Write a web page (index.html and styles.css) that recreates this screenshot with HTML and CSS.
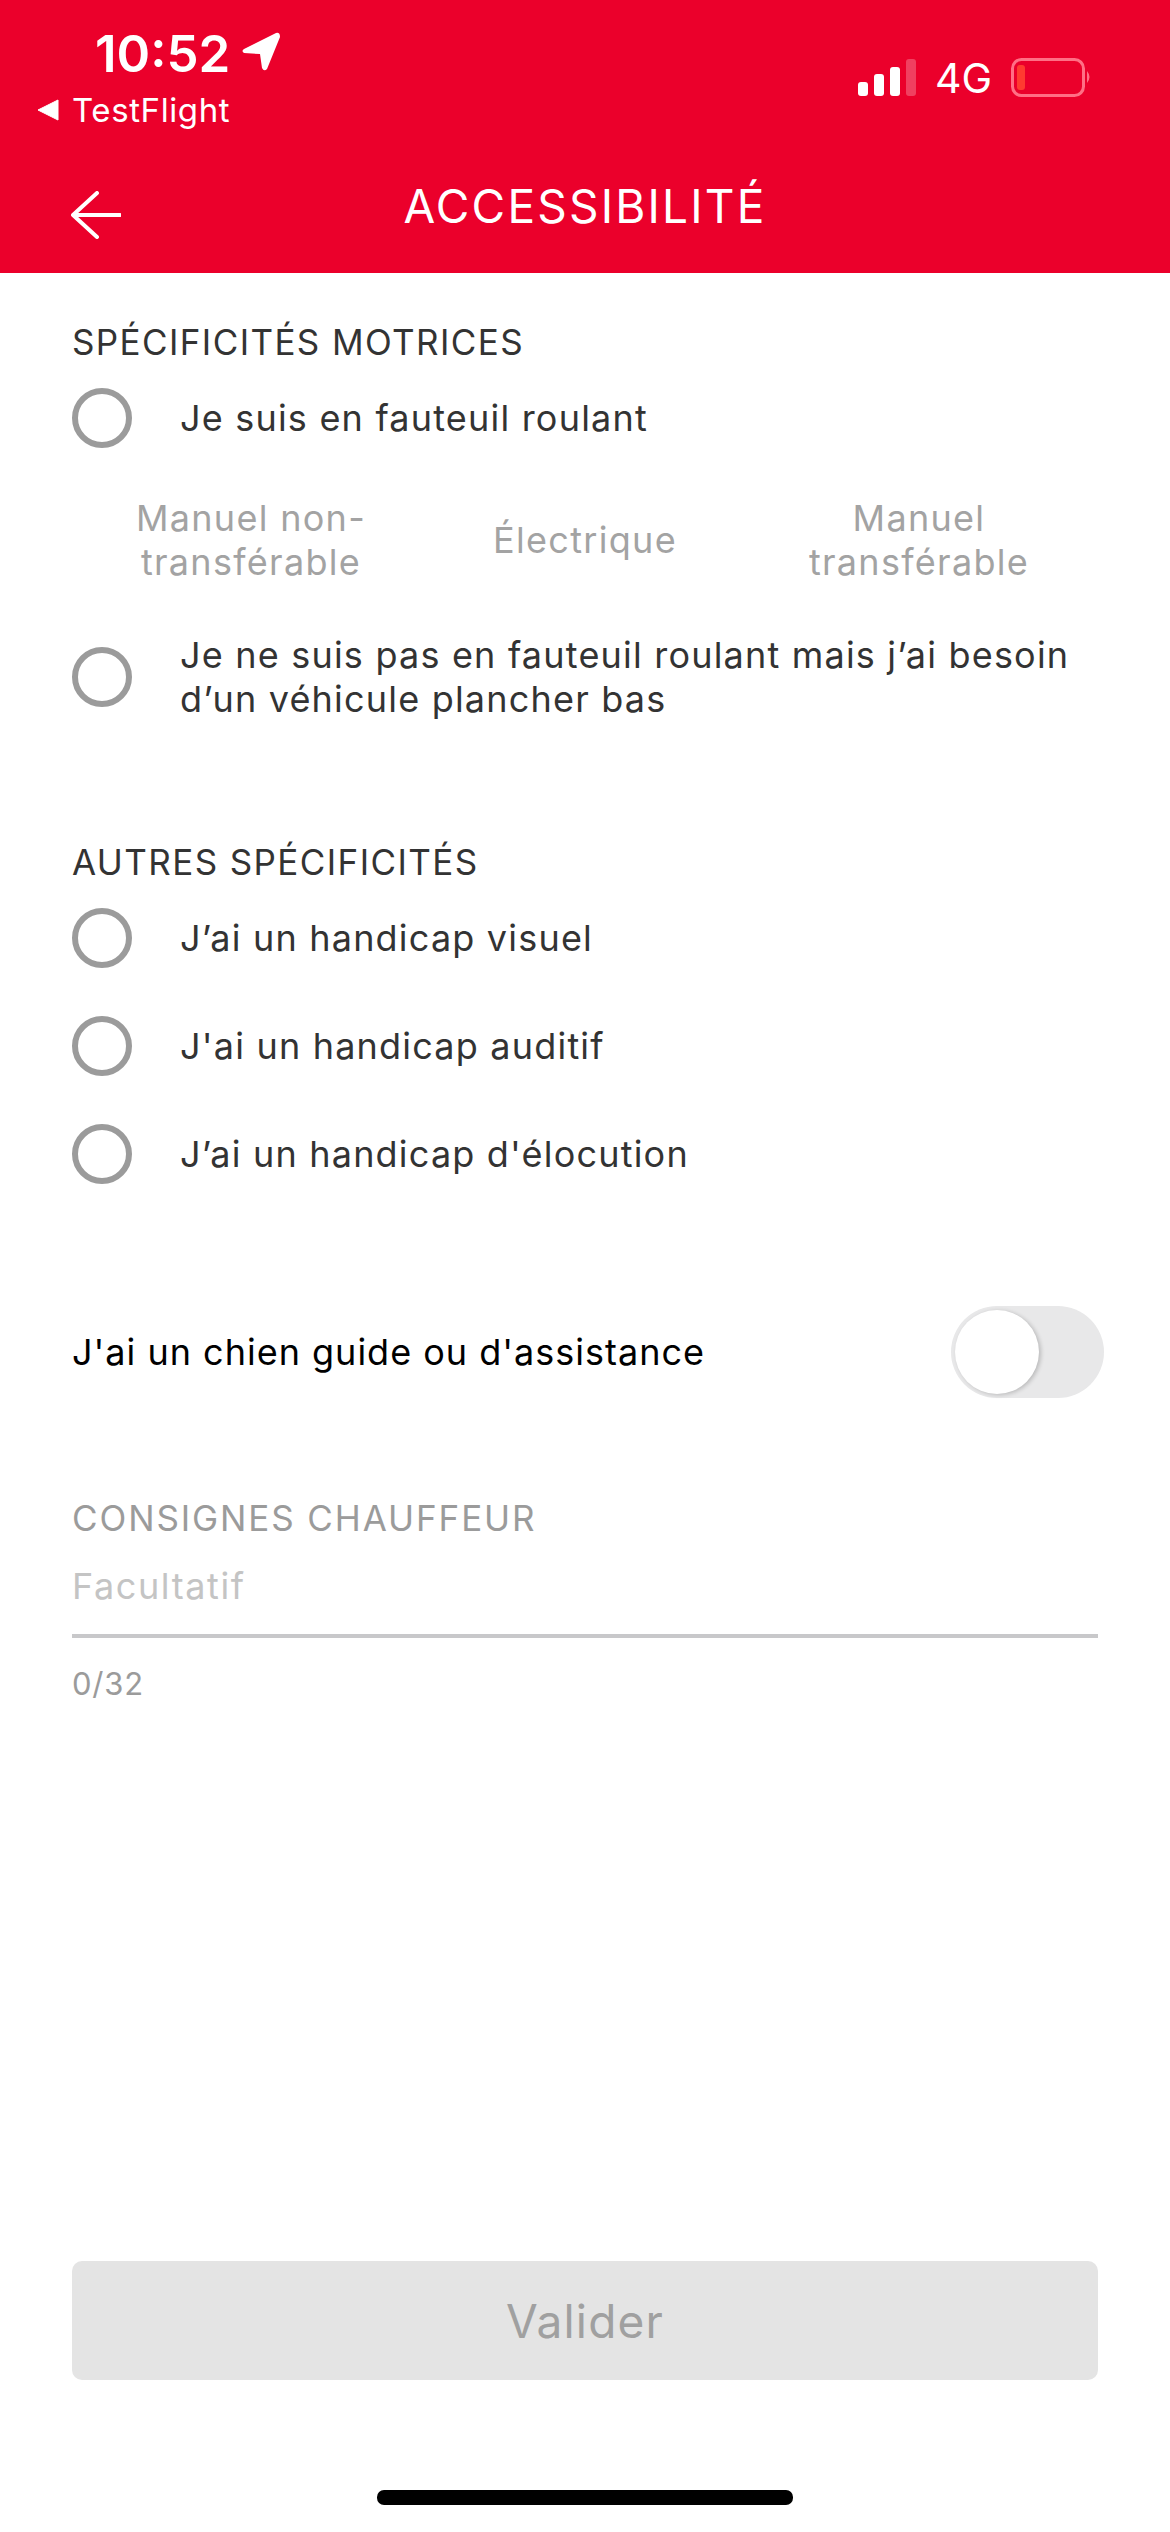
FILE: index.html
```html
<!DOCTYPE html>
<html lang="fr">
<head>
<meta charset="UTF-8">
<meta name="viewport" content="width=device-width, initial-scale=1.0">
<title>Accessibilité</title>
<link rel="stylesheet" href="styles.css">
</head>
<body>
<div class="page">
    <header class="top">
        <div class="status">
            <div class="status-left">
                <div class="time">10:52
                    <svg class="loc" width="40" height="40" viewBox="0 0 40 40"><path d="M35 1 L3 17 Q0 19 3 21 L19 22 L21 36 Q23 40 26 37 L39 5 Q39 0 35 1 Z" fill="#fff"/></svg>
                </div>
                <div class="back-app">
                    <svg width="22" height="22" viewBox="0 0 22 22"><path d="M21 1 V21 L1 11 Z" fill="#fff" stroke="#fff" stroke-linejoin="round"/></svg>
                    <span>TestFlight</span>
                </div>
            </div>
            <div class="status-right">
                <svg width="58" height="38" viewBox="0 0 58 38">
                    <rect x="0" y="23" width="10" height="14" rx="3" fill="#fff"/>
                    <rect x="16" y="15" width="10" height="22" rx="3" fill="#fff"/>
                    <rect x="32" y="8" width="10" height="29" rx="3" fill="#fff"/>
                    <rect x="48" y="0" width="10" height="37" rx="3" fill="#fff" opacity="0.25"/>
                </svg>
                <span class="net">4G</span>
                <svg width="82" height="40" viewBox="0 0 82 40">
                    <rect x="1.5" y="1.5" width="71" height="36" rx="9" fill="none" stroke="#ff6f85" stroke-width="3"/>
                    <rect x="6" y="7" width="8" height="25" rx="3" fill="#ff3b30"/>
                    <path d="M76 13 Q81 19 76 25 Z" fill="#ff6f85"/>
                </svg>
            </div>
        </div>
        <div class="nav">
            <svg class="arrow" width="50" height="48" viewBox="0 0 50 48"><path d="M49 24 H2 M26 2 L2 24 L26 46" fill="none" stroke="#fff" stroke-width="4" stroke-linecap="round" stroke-linejoin="round"/></svg>
            <h1>ACCESSIBILITÉ</h1>
        </div>
    </header>

    <main class="content">
        <h2 class="section-title first">SPÉCIFICITÉS MOTRICES</h2>
        <div class="radio-row"><span class="radio"></span><span class="radio-label">Je suis en fauteuil roulant</span></div>
        <div class="chair-types">
            <div class="chair-type">Manuel non-<br>transférable</div>
            <div class="chair-type">Électrique</div>
            <div class="chair-type">Manuel<br>transférable</div>
        </div>
        <div class="radio-row two-lines"><span class="radio"></span><span class="radio-label">Je ne suis pas en fauteuil roulant mais j’ai besoin<br>d’un véhicule plancher bas</span></div>

        <h2 class="section-title second">AUTRES SPÉCIFICITÉS</h2>
        <div class="radio-row"><span class="radio"></span><span class="radio-label">J’ai un handicap visuel</span></div>
        <div class="radio-row spaced"><span class="radio"></span><span class="radio-label">J'ai un handicap auditif</span></div>
        <div class="radio-row spaced"><span class="radio"></span><span class="radio-label">J’ai un handicap d'élocution</span></div>

        <div class="toggle-row">
            <span class="toggle-label">J'ai un chien guide ou d'assistance</span>
            <span class="toggle"><span class="knob"></span></span>
        </div>

        <div class="notes-title">CONSIGNES CHAUFFEUR</div>
        <div class="notes-input">Facultatif</div>
        <div class="notes-count">0/32</div>

        <button class="submit">Valider</button>
    </main>
    <div class="home-bar"></div>
</div>
</body>
</html>
```

FILE: styles.css
```css
/* Accessibility settings screen */
body {
    margin: 0;
    background-color: #fff;
    font-family: Inter, "Open Sans", Arial, sans-serif;
}
.page {
    width: 1170px;
    height: 2532px;
    display: flex;
    flex-direction: column;
    overflow: hidden;
}
.top {
    height: 273px;
    box-sizing: border-box;
    background-color: #eb002b;
    color: #fff;
}
.status {
    height: 146px;
    box-sizing: border-box;
    display: flex;
    justify-content: space-between;
}
.status-left {
    padding: 24px 0 0 37px;
}
.time {
    display: flex;
    align-items: center;
    gap: 11px;
    margin-left: 58px;
    font-size: 51px;
    font-weight: 600;
    line-height: 60px;
}
.loc {
    margin-top: -4px;
}
.back-app {
    display: flex;
    align-items: center;
    gap: 13px;
    margin-top: 4px;
    font-size: 33px;
    font-weight: 400;
    letter-spacing: 0.6px;
    line-height: 44px;
}
.status-right {
    display: flex;
    align-items: center;
    gap: 19px;
    padding: 42px 77px 0 0;
    height: 114px;
    box-sizing: border-box;
}
.net {
    font-size: 41px;
    font-weight: 400;
}
.nav {
    position: relative;
    height: 127px;
    display: flex;
    align-items: center;
    justify-content: center;
}
.arrow {
    position: absolute;
    left: 71px;
    top: 45px;
}
.nav h1 {
    margin: 0 0 8px;
    font-size: 46px;
    font-weight: 400;
    letter-spacing: 2.2px;
}
.content {
    flex: 1;
    display: flex;
    flex-direction: column;
    padding: 0 72px;
}
.section-title {
    margin: 0;
    font-size: 35px;
    font-weight: 400;
    letter-spacing: 1.4px;
    line-height: 46px;
    color: #333;
}
.section-title.first {
    margin-top: 46px;
}
.section-title.second {
    margin-top: 118px;
}
.radio-row {
    display: flex;
    align-items: center;
    gap: 48px;
    margin-top: 22px;
    height: 62px;
}
.radio-row.spaced {
    margin-top: 46px;
}
.radio-row.two-lines {
    height: 88px;
    margin-top: 49px;
}
.radio {
    width: 60px;
    height: 60px;
    box-sizing: border-box;
    border: 6px solid #9b9b9b;
    border-radius: 50%;
    flex-shrink: 0;
}
.radio-label {
    font-size: 36px;
    letter-spacing: 1.2px;
    line-height: 44px;
    color: #333;
}
.chair-types {
    display: grid;
    grid-template-columns: repeat(3, 334px);
    justify-content: center;
    align-items: center;
    margin-top: 47px;
}
.chair-type {
    text-align: center;
    font-size: 36px;
    letter-spacing: 1.3px;
    line-height: 44px;
    color: #a3a3a3;
}
.toggle-row {
    display: flex;
    justify-content: space-between;
    align-items: center;
    margin-top: 120px;
    height: 94px;
}
.toggle-label {
    font-size: 36px;
    letter-spacing: 1px;
    color: #000;
}
.toggle {
    width: 153px;
    height: 92px;
    margin-right: -6px;
    background-color: #e8e8e9;
    border-radius: 46px;
    display: flex;
    align-items: center;
}
.knob {
    width: 84px;
    height: 84px;
    margin-left: 4px;
    background-color: #fff;
    border-radius: 50%;
    box-shadow: 2px 1px 4px rgba(0, 0, 0, 0.2);
}
.notes-title {
    margin-top: 96px;
    font-size: 35px;
    letter-spacing: 1.9px;
    line-height: 46px;
    color: #9b9b9b;
}
.notes-input {
    margin-top: 22px;
    padding-bottom: 25px;
    border-bottom: 4px solid #c8c8ca;
    font-size: 36px;
    letter-spacing: 1.6px;
    line-height: 46px;
    color: #c4c4c4;
}
.notes-count {
    margin-top: 26px;
    font-size: 31px;
    letter-spacing: 0.8px;
    line-height: 40px;
    color: #9b9b9b;
}
.submit {
    margin-top: auto;
    height: 119px;
    border: none;
    border-radius: 10px;
    background-color: #e4e4e4;
    color: #a0a0a0;
    font-family: Inter, sans-serif;
    font-size: 46px;
    font-weight: 400;
    letter-spacing: 1.2px;
}
.home-bar {
    width: 416px;
    height: 15px;
    margin: 110px auto 27px;
    background-color: #000;
    border-radius: 7px;
}
```
